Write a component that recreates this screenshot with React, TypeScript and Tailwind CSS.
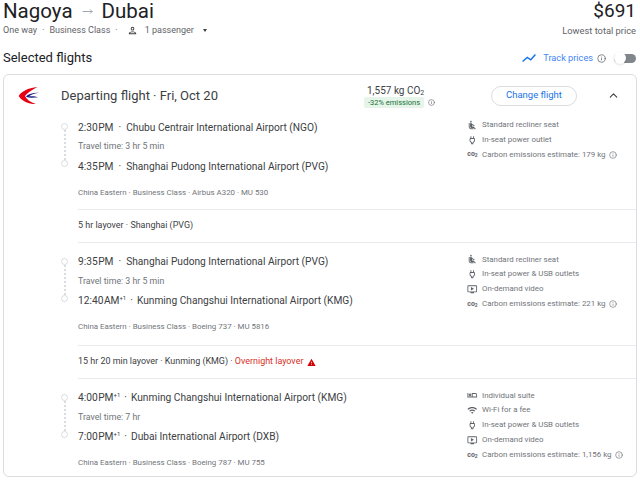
import type { ReactNode } from "react";
import { ChevronUp, Info, MoveRight } from "lucide-react";

type Amenity = { icon: string; text: string; info?: boolean };

type Stop = { time: string; plus?: boolean; airport: string };

type Segment = {
  from: Stop;
  to: Stop;
  travel: string;
  meta: string;
  amenities: Amenity[];
  box: string;
};

const segments: Segment[] = [
  {
    from: { time: "2:30 PM", airport: "Chubu Centrair International Airport (NGO)" },
    to: { time: "4:35 PM", airport: "Shanghai Pudong International Airport (PVG)" },
    travel: "Travel time: 3 hr 5 min",
    meta: "China Eastern · Business Class · Airbus A320 · MU 530",
    box: "h-[93px] pt-[1.5px]",
    amenities: [
      { icon: "seat", text: "Standard recliner seat" },
      { icon: "plug", text: "In-seat power outlet" },
      { icon: "co2", text: "Carbon emissions estimate: 179 kg", info: true },
    ],
  },
  {
    from: { time: "9:35 PM", airport: "Shanghai Pudong International Airport (PVG)" },
    to: { time: "12:40 AM", plus: true, airport: "Kunming Changshui International Airport (KMG)" },
    travel: "Travel time: 3 hr 5 min",
    meta: "China Eastern · Business Class · Boeing 737 · MU 5816",
    box: "h-[102px] pt-[9px]",
    amenities: [
      { icon: "seat", text: "Standard recliner seat" },
      { icon: "plug", text: "In-seat power & USB outlets" },
      { icon: "video", text: "On-demand video" },
      { icon: "co2", text: "Carbon emissions estimate: 221 kg", info: true },
    ],
  },
  {
    from: { time: "4:00 PM", plus: true, airport: "Kunming Changshui International Airport (KMG)" },
    to: { time: "7:00 PM", plus: true, airport: "Dubai International Airport (DXB)" },
    travel: "Travel time: 7 hr",
    meta: "China Eastern · Business Class · Boeing 787 · MU 755",
    box: "h-[97px] pt-[9px]",
    amenities: [
      { icon: "suite", text: "Individual suite" },
      { icon: "wifi", text: "Wi-Fi for a fee" },
      { icon: "plug", text: "In-seat power & USB outlets" },
      { icon: "video", text: "On-demand video" },
      { icon: "co2", text: "Carbon emissions estimate: 1,156 kg", info: true },
    ],
  },
];

const iconPaths: Record<string, string> = {
  seat: "M7.59 5.41c-.78-.78-.78-2.050 0-2.830.78-.78 2.050-.78 2.830 0 .78.78.78 2.050 0 2.830-.79.79-2.050.79-2.830 0zM6 16V7H4v9c0 2.760 2.240 5 5 5h6v-2H9c-1.660 0-3-1.340-3-3zm14 4.070L14.930 15H11.500v-3.680c1.400 1.150 3.600 2.160 5.500 2.160v-2.160c-1.660.02-3.610-.870-4.670-2.040l-1.400-1.550c-.19-.21-.43-.38-.69-.5-.29-.14-.62-.23-.96-.23h-.03C8.010 7 7 8.010 7 9.250V15c0 1.660 1.340 3 3 3h5.070l3.500 3.500L20 20.070z",
  plug: "M16 7V3h-2v4h-4V3H8v4h-.01C7 6.990 6 7.990 6 8.990v5.490L9.500 18v3h5v-3l3.500-3.510v-5.500c0-1-1-2-2-2zm0 6.650l-3.500 3.510V19h-1v-1.840L8 13.650V9h8v4.650z",
  video: "M21 3H3c-1.100 0-2 .9-2 2v12c0 1.100.9 2 2 2h5v2h8v-2h5c1.100 0 2-.9 2-2V5c0-1.100-.9-2-2-2zm0 14H3V5h18v12zM16 11l-7 4V7z",
  wifi: "M1 9l2 2c4.970-4.970 13.030-4.970 18 0l2-2C16.930 2.930 7.080 2.930 1 9zm8 8l3 3 3-3c-1.650-1.660-4.340-1.660-6 0zm-4-4l2 2c2.760-2.760 7.240-2.760 10 0l2-2C15.140 9.140 8.870 9.140 5 13z",
  suite: "M7 14c1.660 0 3-1.340 3-3S8.660 8 7 8s-3 1.340-3 3 1.340 3 3 3zm0-4c.550 0 1 .450 1 1s-.450 1-1 1-1-.450-1-1 .450-1 1-1zm12-3h-8v8H3V7H1v10h22v-6c0-2.210-1.790-4-4-4zm2 8h-8V9h6c1.100 0 2 .9 2 2v4z",
};

function AmenityIcon({ icon }: { icon: string }) {
  if (icon === "co2") {
    return (
      <span className="text-[7px] font-bold leading-none text-[#5f6368]">
        co<sub className="text-[5px]">2</sub>
      </span>
    );
  }
  return (
    <svg viewBox="0 0 24 24" className="h-[10.5px] w-[10.5px]" fill="#5f6368">
      <path d={iconPaths[icon]} />
    </svg>
  );
}

function StopRow({ stop }: { stop: Stop }) {
  return (
    <div className="flex h-[19.5px] items-center whitespace-nowrap text-[10.2px] text-[#3c4043]">
      <span className="[word-spacing:-2px]">{stop.time}</span>
      {stop.plus && <sup className="text-[6px] leading-none">+1</sup>}
      <span className={stop.plus ? "mx-[4px]" : "mx-[5px]"}>·</span>
      <span>{stop.airport}</span>
    </div>
  );
}

function FlightSegment({ seg }: { seg: Segment }) {
  return (
    <div className={`ml-[57px] flex ${seg.box}`}>
      <div className="mt-[5.5px] flex h-[44px] w-[17px] flex-col items-start">
        <div className="h-[7px] w-[7px] rounded-full border border-[#dadce0]" />
        <div className="ml-[3px] flex-1 border-l-2 border-dotted border-[#dadce0]" />
        <div className="h-[7px] w-[7px] rounded-full border border-[#dadce0]" />
      </div>
      <div className="w-[388px]">
        <StopRow stop={seg.from} />
        <div className="flex h-[19.5px] items-center text-[8.8px] text-[#70757a]">
          {seg.travel}
        </div>
        <StopRow stop={seg.to} />
        <div className="mt-[11.5px] text-[7.9px] leading-[10px] text-[#70757a]">{seg.meta}</div>
      </div>
      <div className="flex flex-col">
        {seg.amenities.map((a) => (
          <div key={a.text} className="flex h-[14.9px] items-center whitespace-nowrap text-[7.9px] text-[#70757a]">
            <span className="flex w-[13px] justify-center">
              <AmenityIcon icon={a.icon} />
            </span>
            <span className="ml-[3px]">{a.text}</span>
            {a.info && <Info className="ml-[3px] h-[8px] w-[8px]" />}
          </div>
        ))}
      </div>
    </div>
  );
}

function Layover({ children }: { children: ReactNode }) {
  return (
    <div className="ml-[74px] flex h-[34px] items-center whitespace-pre border-y border-[#e8eaed] text-[8.95px] text-[#3c4043]">
      {children}
    </div>
  );
}

function Logo() {
  return (
    <svg viewBox="0 0 24 20" className="h-[18px] w-[23px]">
      <path d="M0 10C3 5 10 1 21 0C15 3 10 6 7 10C9 14 13 17 19 19C10 19 3 15 0 10Z" fill="#e60012" />
      <path d="M8 10.500C11 7.500 17 6 23 6.500C18 7 14 8.500 11.500 10.500C15 10 19 10.500 22 11.500C18 11.500 13 13 8 10.500Z" fill="#1d2088" />
    </svg>
  );
}

export default function App() {
  return (
    <div className="h-[482px] w-[640px] overflow-hidden bg-white font-['Roboto',sans-serif]">
      <header className="flex justify-between pl-[3px] pr-[4px]">
        <div>
          <div className="flex h-[22px] items-center text-[20.5px] leading-[22px] text-[#202124]">
            Nagoya
            <MoveRight className="mx-[9px] h-[11px] w-[11px] text-[#9aa0a6]" />
            Dubai
          </div>
          <div className="mt-[3px] flex h-[11px] items-center text-[9px] text-[#5f6368]">
            One way<span className="mx-[5px]">·</span>Business Class
            <span className="ml-[5px]">·</span>
            <svg viewBox="0 0 24 24" className="ml-[9px] mr-[7px] h-[11px] w-[11px]" fill="#3c4043">
              <path d="M12 6a2 2 0 1 1 0 4 2 2 0 0 1 0-4m0 10c2.700 0 5.800 1.290 6 2H6c.230-.720 3.310-2 6-2M12 4a4 4 0 1 0 0 8 4 4 0 0 0 0-8zm0 10c-2.670 0-8 1.340-8 4v2h16v-2c0-2.660-5.330-4-8-4z" />
            </svg>
            1 passenger
            <span className="ml-[9px] h-0 w-0 border-x-[2.5px] border-t-[3px] border-x-transparent border-t-[#3c4043]" />
          </div>
        </div>
        <div className="text-right">
          <div className="text-[19px] leading-[22px] text-[#202124]">$691</div>
          <div className="mt-[3px] h-[11px] text-[9.3px] leading-[11px] text-[#5f6368]">Lowest total price</div>
        </div>
      </header>

      <div className="mt-[14px] flex h-[16px] items-center justify-between pl-[3px] pr-[4px]">
        <h2 className="text-[13px] text-[#202124]">Selected flights</h2>
        <div className="flex items-center">
          <svg viewBox="0 0 24 24" className="h-[14px] w-[14px]" fill="none" stroke="#1a73e8" strokeWidth="2.500">
            <path d="M1 18l8-7 6 4 8-9" />
          </svg>
          <span className="ml-[7px] text-[9.2px] text-[#4285f4]">Track prices</span>
          <Info className="ml-[4px] h-[9px] w-[9px] text-[#5f6368]" />
          <div className="relative ml-[8px] h-[9px] w-[22px] rounded-full bg-[#80868b]">
            <div className="absolute -top-[1.5px] left-0 h-[12px] w-[12px] rounded-full bg-white shadow" />
          </div>
        </div>
      </div>

      <section className="mx-[3px] mt-[8px] h-[403px] rounded-[6px] border border-[#dadce0]">
        <div className="flex h-[41px] items-center">
          <div className="ml-[14px] flex w-[43px]"><Logo /></div>
          <div className="text-[13px] text-[#3c4043]">Departing flight · Fri, Oct 20</div>
          <div className="ml-[146px] w-[127px]">
            <div className="ml-[3px] text-[10px] leading-[13px] text-[#3c4043]">
              1,557 kg CO<sub className="text-[7px]">2</sub>
            </div>
            <div className="flex items-center">
              <span className="rounded-[2px] bg-[#e6f4ea] px-[4px] text-[7.500px] leading-[11px] text-[#137333]">-32% emissions</span>
              <Info className="ml-[4px] h-[7px] w-[7px] text-[#5f6368]" />
            </div>
          </div>
          <button className="h-[20px] w-[86px] rounded-full border border-[#dadce0] text-[9.500px] text-[#1a73e8]">Change flight</button>
          <ChevronUp className="ml-[30px] h-[13px] w-[13px] text-[#3c4043]" />
        </div>

        <FlightSegment seg={segments[0]} />
        <Layover>5 hr layover · Shanghai (PVG)</Layover>
        <FlightSegment seg={segments[1]} />
        <Layover>
          {"15 hr 20 min layover · Kunming (KMG) · "}
          <span className="text-[#d93025]">Overnight layover</span>
          <svg viewBox="0 0 24 24" className="ml-[4px] h-[9px] w-[9px]" fill="#d50000">
            <path d="M1 21h22L12 2 1 21zm12-3h-2v-2h2v2zm0-4h-2v-4h2v4z" />
          </svg>
        </Layover>
        <FlightSegment seg={segments[2]} />
      </section>
    </div>
  );
}
